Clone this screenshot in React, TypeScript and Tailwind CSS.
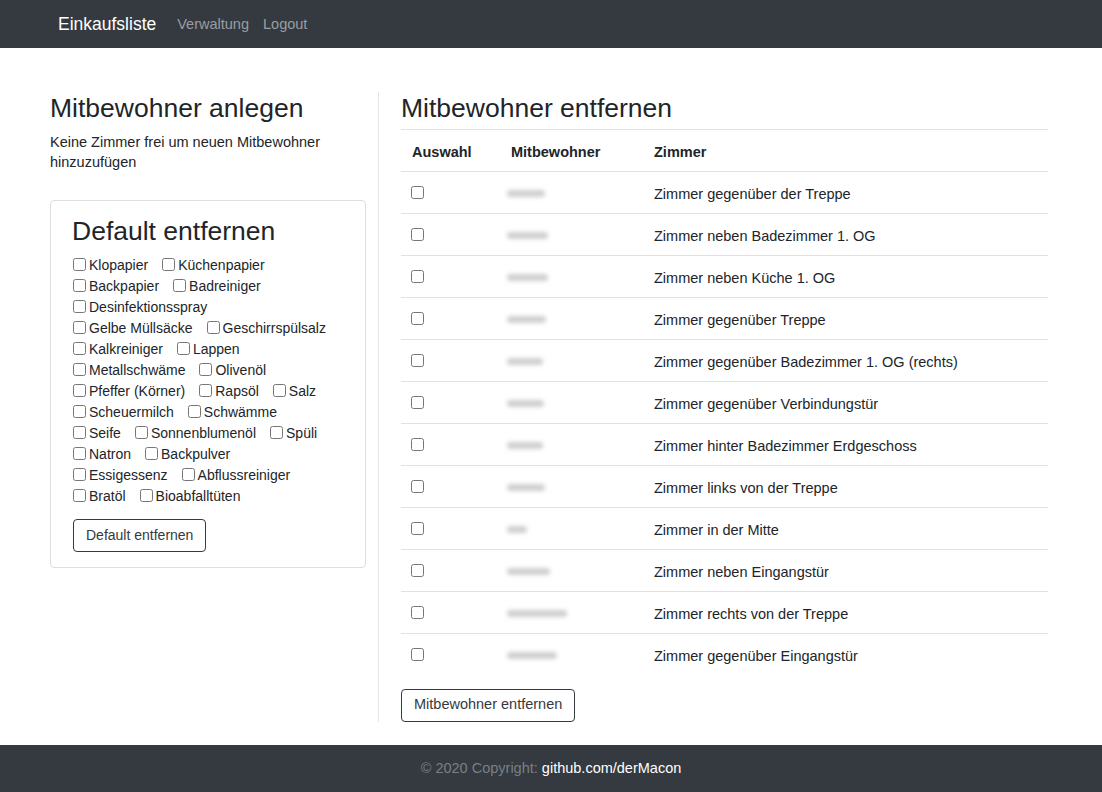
import React from "react";

const rows: { name: number; room: string }[] = [
  { name: 38, room: "Zimmer gegenüber der Treppe" },
  { name: 41, room: "Zimmer neben Badezimmer 1. OG" },
  { name: 41, room: "Zimmer neben Küche 1. OG" },
  { name: 39, room: "Zimmer gegenüber Treppe" },
  { name: 36, room: "Zimmer gegenüber Badezimmer 1. OG (rechts)" },
  { name: 37, room: "Zimmer gegenüber Verbindungstür" },
  { name: 36, room: "Zimmer hinter Badezimmer Erdgeschoss" },
  { name: 38, room: "Zimmer links von der Treppe" },
  { name: 20, room: "Zimmer in der Mitte" },
  { name: 43, room: "Zimmer neben Eingangstür" },
  { name: 60, room: "Zimmer rechts von der Treppe" },
  { name: 50, room: "Zimmer gegenüber Eingangstür" },
];

const defaults: string[][] = [
  ["Klopapier", "Küchenpapier"],
  ["Backpapier", "Badreiniger"],
  ["Desinfektionsspray"],
  ["Gelbe Müllsäcke", "Geschirrspülsalz"],
  ["Kalkreiniger", "Lappen"],
  ["Metallschwäme", "Olivenöl"],
  ["Pfeffer (Körner)", "Rapsöl", "Salz"],
  ["Scheuermilch", "Schwämme"],
  ["Seife", "Sonnenblumenöl", "Spüli"],
  ["Natron", "Backpulver"],
  ["Essigessenz", "Abflussreiniger"],
  ["Bratöl", "Bioabfalltüten"],
];

export default function App() {
  return (
    <div className="min-h-screen flex flex-col bg-white text-[#212529] font-['Liberation_Sans',Arial,sans-serif]">
      <nav className="h-[48px] shrink-0 bg-[#343a40] flex items-center pl-[58px]">
        <span className="text-[17.5px] text-white mr-[14px] mt-[1px]">Einkaufsliste</span>
        <span className="text-[14.5px] text-[#9a9da0] px-[7px] mt-[1px]">Verwaltung</span>
        <span className="text-[14.5px] text-[#9a9da0] px-[7px] mt-[1px]">Logout</span>
      </nav>

      <main className="flex-1 pt-[44px] pb-[23px]">
        <div className="ml-[35px] w-[1028px] flex">
          <div className="w-[344px] shrink-0 pl-[15px] pr-[12px] border-r border-[#e3e3ea]">
            <h3 className="text-[26.5px] leading-[1.2] mb-[7px] pt-[1px]">Mitbewohner anlegen</h3>
            <p className="text-[14.5px] leading-[20px] mb-[28px]">
              Keine Zimmer frei um neuen Mitbewohner hinzuzufügen
            </p>
            <div className="border border-[#dfdfdf] rounded-[4px] pt-[15px] pb-[15px] pl-[22px] pr-[16px]">
              <h3 className="text-[26.5px] leading-[1.2] mb-[6px] -ml-[1px]">Default entfernen</h3>
              <div className="flex flex-col">
                {defaults.map((row, i) => (
                  <div key={i} className="h-[21px] flex items-center">
                    {row.map((item) => (
                      <label key={item} className="flex items-center mr-[14px] text-[14px]">
                        <input type="checkbox" className="m-0 w-[13px] h-[13px]" />
                        <span className="ml-[3px] mt-[2px]">{item}</span>
                      </label>
                    ))}
                  </div>
                ))}
              </div>
              <button className="mt-[13px] h-[33px] px-[12px] border border-[#343a40] rounded-[4px] text-[14px] text-[#343a40] bg-white">
                Default entfernen
              </button>
            </div>
          </div>

          <div className="flex-1 pl-[22px] pr-[15px]">
            <h3 className="text-[26.5px] leading-[1.2] mb-[4px] pt-[1px]">Mitbewohner entfernen</h3>
            <div className="flex flex-col">
              <div className="h-[42px] border-t border-[#dee2e6] flex items-center text-[14.5px] font-bold">
                <div className="w-[99px] pl-[11px] mt-[6px]">Auswahl</div>
                <div className="w-[142px] pl-[11px] mt-[6px]">Mitbewohner</div>
                <div className="flex-1 pl-[12px] mt-[6px]">Zimmer</div>
              </div>
              {rows.map((r, i) => (
                <div key={i} className="h-[42px] border-t border-[#dee2e6] flex items-center text-[14.5px]">
                  <div className="w-[99px] pl-[10px] flex items-center">
                    <input type="checkbox" className="m-0 w-[13px] h-[13px]" />
                  </div>
                  <div className="w-[142px] pl-[7px] flex items-center mt-[3px]">
                    <div
                      className="h-[7px] rounded-full bg-[#cfcfcf] blur-[2px]"
                      style={{ width: r.name }}
                    />
                  </div>
                  <div className="flex-1 pl-[12px] mt-[5px]">{r.room}</div>
                </div>
              ))}
            </div>
            <button className="mt-[14px] h-[33px] px-[12px] border border-[#343a40] rounded-[4px] text-[14.5px] text-[#343a40] bg-white">
              Mitbewohner entfernen
            </button>
          </div>
        </div>
      </main>

      <footer className="h-[47px] shrink-0 bg-[#343a40] flex items-center justify-center text-[14.5px]">
        <span className="text-[#7b7f83] mt-[1px]">© 2020 Copyright:&nbsp;</span>
        <span className="text-white mt-[1px]">github.com/derMacon</span>
      </footer>
    </div>
  );
}
